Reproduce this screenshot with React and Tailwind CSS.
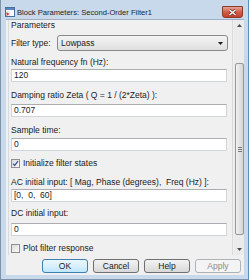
import React from 'react';

function TitleIcon() {
  return (
    <svg width="10" height="10" viewBox="0 0 10 10" className="mt-[7px] ml-[4px] shrink-0">
      <rect x="0.5" y="0.5" width="9" height="9" fill="#ffffff" stroke="#4a6f9c" />
      <rect x="1" y="1" width="8" height="2" fill="#5b86c2" />
      <path d="M1 4 L5 4 L5 9 L1 9 Z" fill="#e9edf3" />
      <path d="M1.5 5 L4.5 7 L1.5 9 Z" fill="#d8402a" />
    </svg>
  );
}

function CloseButton() {
  return (
    <div className="mt-[6px] mr-[5px] ml-auto w-[21px] h-[12px] rounded-b-[3px] border border-[#8c3a2c] bg-linear-to-b from-[#e4a296] via-[#d25c47] to-[#c4402b] flex items-center justify-center">
      <svg width="9" height="7" viewBox="0 0 9 7">
        <path d="M1.5 1 L7.5 6 M7.5 1 L1.5 6" stroke="#5a1e14" strokeWidth="2.6" />
        <path d="M1.5 1 L7.5 6 M7.5 1 L1.5 6" stroke="#ffffff" strokeWidth="1.5" />
      </svg>
    </div>
  );
}

function Label({ children, className = '' }) {
  return <div className={`h-[12px] flex items-center leading-none ${className}`}>{children}</div>;
}

function TextField({ value, className = '' }) {
  return (
    <div className={`h-[13px] bg-white border border-[#d0d5dc] border-t-[#abadb3] flex items-center pl-[2px] leading-none ${className}`}>
      {value}
    </div>
  );
}

function CheckBox({ checked, label, className = '' }) {
  return (
    <div className={`h-[12px] flex items-center ${className}`}>
      <div className="w-[9px] h-[9px] border border-[#8e8f8f] bg-linear-to-br from-[#dcdcdc] to-[#fafafa] flex items-center justify-center shrink-0">
        {checked && (
          <svg width="7" height="7" viewBox="0 0 7 7">
            <path d="M1 3.6 L2.7 5.4 L6 1.2" fill="none" stroke="#3c5a94" strokeWidth="1.3" />
          </svg>
        )}
      </div>
      <span className="ml-[3px] leading-none">{label}</span>
    </div>
  );
}

function Button({ children, variant = 'normal' }) {
  let cls = 'border-[#707070] bg-linear-to-b from-[#f3f3f3] via-[#e6e6e6] to-[#d8d8d8] text-[#1b1b1b]';
  if (variant === 'default') cls = 'border-[#3c7fb1] bg-linear-to-b from-[#eaf6fd] via-[#d9f0fc] to-[#bee6fd] text-[#1b1b1b]';
  if (variant === 'disabled') cls = 'border-[#adb2b5] bg-[#f4f4f4] text-[#8a8a8a]';
  return (
    <div className={`w-[46px] h-[14px] rounded-[3px] border flex items-center justify-center leading-none ${cls}`}>
      {children}
    </div>
  );
}

function ScrollBar() {
  return (
    <div className="w-[10px] flex flex-col bg-[#ebebeb]">
      <div className="h-[10px] flex items-center justify-center">
        <svg width="5" height="3" viewBox="0 0 5 3"><path d="M0 3 L2.5 0 L5 3 Z" fill="#4d4d4d" /></svg>
      </div>
      <div className="h-[33px]" />
      <div className="h-[172px] ml-[1px] rounded-[2px] border border-[#979797] bg-linear-to-r from-[#f2f2f2] to-[#d4d4d4] flex flex-col items-center justify-center gap-[1px]">
        <div className="w-[4px] h-[1px] bg-[#7a7a7a]" />
        <div className="w-[4px] h-[1px] bg-[#7a7a7a]" />
        <div className="w-[4px] h-[1px] bg-[#7a7a7a]" />
      </div>
      <div className="h-[9px]" />
      <div className="h-[10px] flex items-center justify-center">
        <svg width="5" height="3" viewBox="0 0 5 3"><path d="M0 0 L5 0 L2.5 3 Z" fill="#4d4d4d" /></svg>
      </div>
    </div>
  );
}

export default function App() {
  return (
    <div className="w-[249px] h-[280px] flex flex-col bg-[#c8d9ec] border-l border-b border-[#7f93a8] border-r border-r-[#5b8fb9] text-[8.5px] text-[#1b1b1b] font-['Liberation_Sans',Arial,sans-serif] overflow-hidden">
      {/* title bar */}
      <div className="h-[19px] flex items-start shrink-0">
        <TitleIcon />
        <div className="ml-[2px] mt-[8px] text-[7.6px] leading-[10px] text-[#1e1e1e] whitespace-nowrap">
          Block Parameters: Second-Order Filter1
        </div>
        <CloseButton />
      </div>

      {/* body */}
      <div className="flex-1 flex flex-col ml-[5px] mr-[4px] mb-[4px] bg-[#f0f0f0] border-t border-[#9fb0c2]">
        <div className="h-[235px] flex">
          <div className="flex-1 flex">
            <div className="flex-1 ml-[2px] mr-[1px] border-l border-r border-[#dadada] pl-[2px] pr-[5px] flex flex-col">
              <div className="h-[11px] flex items-center leading-none">Parameters</div>

              <div className="mt-[4px] h-[16px] flex items-center">
                <span className="leading-none">Filter type:</span>
                <div className="ml-auto -mr-[1px] w-[171px] h-[16px] rounded-[3px] border border-[#8a8a8a] bg-linear-to-b from-[#f4f4f4] to-[#e0e0e0] flex items-center pl-[3px] pr-[4px]">
                  <span className="leading-none">Lowpass</span>
                  <svg width="5" height="3" viewBox="0 0 5 3" className="ml-auto">
                    <path d="M0 0 L5 0 L2.5 3 Z" fill="#1b1b1b" />
                  </svg>
                </div>
              </div>

              <Label className="mt-[5px]">Natural frequency fn (Hz):</Label>
              <TextField className="mt-[1px]" value="120" />

              <Label className="mt-[7px]">Damping ratio Zeta ( Q = 1 / (2*Zeta) ):</Label>
              <TextField className="mt-[3px]" value="0.707" />

              <Label className="mt-[7px]">Sample time:</Label>
              <TextField className="mt-[2px]" value="0" />

              <CheckBox className="mt-[6px]" checked label="Initialize filter states" />

              <Label className="mt-[7px]">AC initial input: [ Mag, Phase (degrees),&nbsp; Freq (Hz) ]:</Label>
              <TextField className="mt-[1px]" value={'[0,\u00a0 0,\u00a0 60]'} />

              <Label className="mt-[5px]">DC initial input:</Label>
              <TextField className="mt-[4px]" value="0" />

              <CheckBox className="mt-[6px]" label="Plot filter response" />
            </div>
          </div>
          <ScrollBar />
        </div>

        <div className="mt-[4px] ml-[36px] flex gap-[5px]">
          <Button variant="default">OK</Button>
          <Button>Cancel</Button>
          <Button>Help</Button>
          <Button variant="disabled">Apply</Button>
        </div>
      </div>
    </div>
  );
}
